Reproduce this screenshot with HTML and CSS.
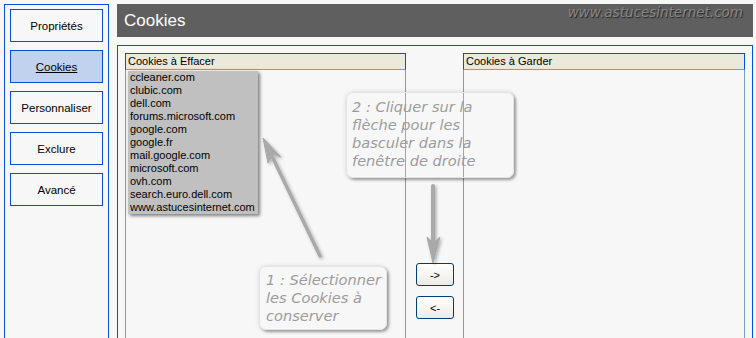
FILE: index.html
```html
<!DOCTYPE html>
<html>
    <head>
        <title>Cookies</title>
        <link rel="stylesheet" href="styles.css">
    </head>
    <body>
        <div class="app">
            <div class="nav">
                <div class="nav_item">Propriétés</div>
                <div class="nav_item selected">Cookies</div>
                <div class="nav_item">Personnaliser</div>
                <div class="nav_item">Exclure</div>
                <div class="nav_item">Avancé</div>
            </div>

            <div class="main">
                <div class="header">
                    <span class="title">Cookies</span>
                    <span class="watermark">www.astucesinternet.com</span>
                </div>
                <div class="panel">
                    <div class="listbox left_box">
                        <div class="lb_head">Cookies à Effacer</div>
                        <div class="lb_body">
                            <div class="selection">
                                <div>ccleaner.com</div>
                                <div>clubic.com</div>
                                <div>dell.com</div>
                                <div>forums.microsoft.com</div>
                                <div>google.com</div>
                                <div>google.fr</div>
                                <div>mail.google.com</div>
                                <div>microsoft.com</div>
                                <div>ovh.com</div>
                                <div>search.euro.dell.com</div>
                                <div>www.astucesinternet.com</div>
                            </div>
                        </div>
                    </div>
                    <div class="mover">
                        <button class="move_btn">-&gt;</button>
                        <button class="move_btn">&lt;-</button>
                    </div>
                    <div class="listbox right_box">
                        <div class="lb_head">Cookies à Garder</div>
                        <div class="lb_body"></div>
                    </div>
                </div>
            </div>

            <!-- annotations drawn over the window -->
            <svg class="arrows" width="756" height="338" viewBox="0 0 756 338">
                <defs>
                    <filter id="shade" x="-50%" y="-50%" width="200%" height="200%">
                        <feDropShadow dx="1.5" dy="1.5" stdDeviation="1.5" flood-color="#000" flood-opacity="0.3"/>
                    </filter>
                </defs>
                <g fill="#a9a9a9" stroke="#a9a9a9" filter="url(#shade)">
                    <line x1="320" y1="256" x2="270" y2="152" stroke-width="3.5" stroke-linecap="round"/>
                    <polygon points="263,138 281,157 273,154 268,163" stroke-width="1" stroke-linejoin="round"/>
                    <line x1="433" y1="186" x2="433" y2="244" stroke-width="4" stroke-linecap="round"/>
                    <polygon points="433,263 427,237 433,243 440,237" stroke-width="1" stroke-linejoin="round"/>
                </g>
            </svg>

            <div class="callout callout_two">2 : Cliquer sur la<br>flèche pour les<br>basculer dans la<br>fenêtre de droite</div>
            <div class="callout callout_one">1 : Sélectionner<br>les Cookies à<br>conserver</div>
        </div>
    </body>
</html>
```

FILE: styles.css
```css
body {
    margin: 0px;
    background: #f7f7f7;
    font-family: "Liberation Sans", Arial, sans-serif;
    font-size: 11px;
    color: #000;
    overflow: hidden;
}
.app {
    position: relative;
    display: flex;
    height: 100vh;
    box-sizing: border-box;
    padding: 4px 3px 0px 4px;
}

/* left menu */
.nav {
    width: 105px;
    box-sizing: border-box;
    border: 1px solid #0050e0;
    border-bottom: 0px;
    padding: 4px 5px;
    display: flex;
    flex-direction: column;
    gap: 8px;
}
.nav_item {
    height: 33px;
    box-sizing: border-box;
    border: 1px solid #0050e0;
    display: flex;
    align-items: center;
    justify-content: center;
    background: #f7f7f7;
    font-size: 11.5px;
}
.nav_item.selected {
    background: #c1d2ee;
    text-decoration: underline;
}

/* right side */
.main {
    flex: 1;
    margin-left: 8px;
    display: flex;
    flex-direction: column;
}
.header {
    height: 33px;
    background: #5f5f5f;
    position: relative;
    display: flex;
    align-items: center;
    padding-left: 7px;
}
.title {
    color: #fff;
    font-size: 17px;
}
.watermark {
    position: absolute;
    right: 10px;
    top: 0px;
    font-family: "DejaVu Sans", Verdana, sans-serif;
    font-style: italic;
    font-size: 13.5px;
    color: #868686;
    text-shadow: 1px 1px 1px #262626;
}
.panel {
    flex: 1;
    margin-top: 8px;
    border: 1px solid #0050e0;
    border-bottom: 0px;
    padding: 7px 7px 0px 7px;
    display: flex;
}
.listbox {
    display: flex;
    flex-direction: column;
}
.left_box {
    width: 281px;
}
.right_box {
    width: 282px;
}
.lb_head {
    height: 17px;
    box-sizing: border-box;
    border: 1px solid #0050e0;
    border-bottom-color: #7f9db9;
    background: #ebe9d9;
    padding-left: 2px;
    line-height: 15px;
}
.lb_body {
    flex: 1;
    border-left: 1px solid #7f9db9;
    border-right: 1px solid #7f9db9;
    padding: 1px 0px 0px 2px;
}
.selection {
    width: 130px;
    background: #c0c0c0;
    line-height: 13px;
    padding-left: 2px;
    box-sizing: border-box;
    box-shadow: 2px 2px 3px rgba(0, 0, 0, 0.45),
                0px 0px 6px rgba(0, 0, 0, 0.08);
}
.mover {
    width: 57px;
    padding: 210px 0px 0px 10px;
    box-sizing: border-box;
    display: flex;
    flex-direction: column;
    gap: 10px;
}
.move_btn {
    width: 38px;
    height: 23px;
    border: 1px solid #003c74;
    border-radius: 3px;
    background: linear-gradient(#ffffff, #ecebe6);
    font-family: "Liberation Sans", Arial, sans-serif;
    font-size: 11px;
    padding: 0px;
}

/* notes */
.arrows {
    position: absolute;
    left: 0px;
    top: 0px;
    pointer-events: none;
}
.callout {
    position: absolute;
    box-sizing: border-box;
    border: 1px solid #e4e4e4;
    border-radius: 7px;
    background: rgba(250, 250, 250, 0.15);
    box-shadow: 2px 2px 3px rgba(0, 0, 0, 0.35),
                0px 0px 5px rgba(0, 0, 0, 0.12);
    font-family: "DejaVu Sans", Verdana, sans-serif;
    font-style: italic;
    font-size: 14.6px;
    line-height: 18px;
    color: #9c9c9c;
}
.callout_two {
    left: 346px;
    top: 92px;
    width: 168px;
    height: 86px;
    padding: 5px 0px 0px 5px;
}
.callout_one {
    left: 259px;
    top: 266px;
    width: 128px;
    height: 64px;
    padding: 4px 0px 0px 6px;
}
```
